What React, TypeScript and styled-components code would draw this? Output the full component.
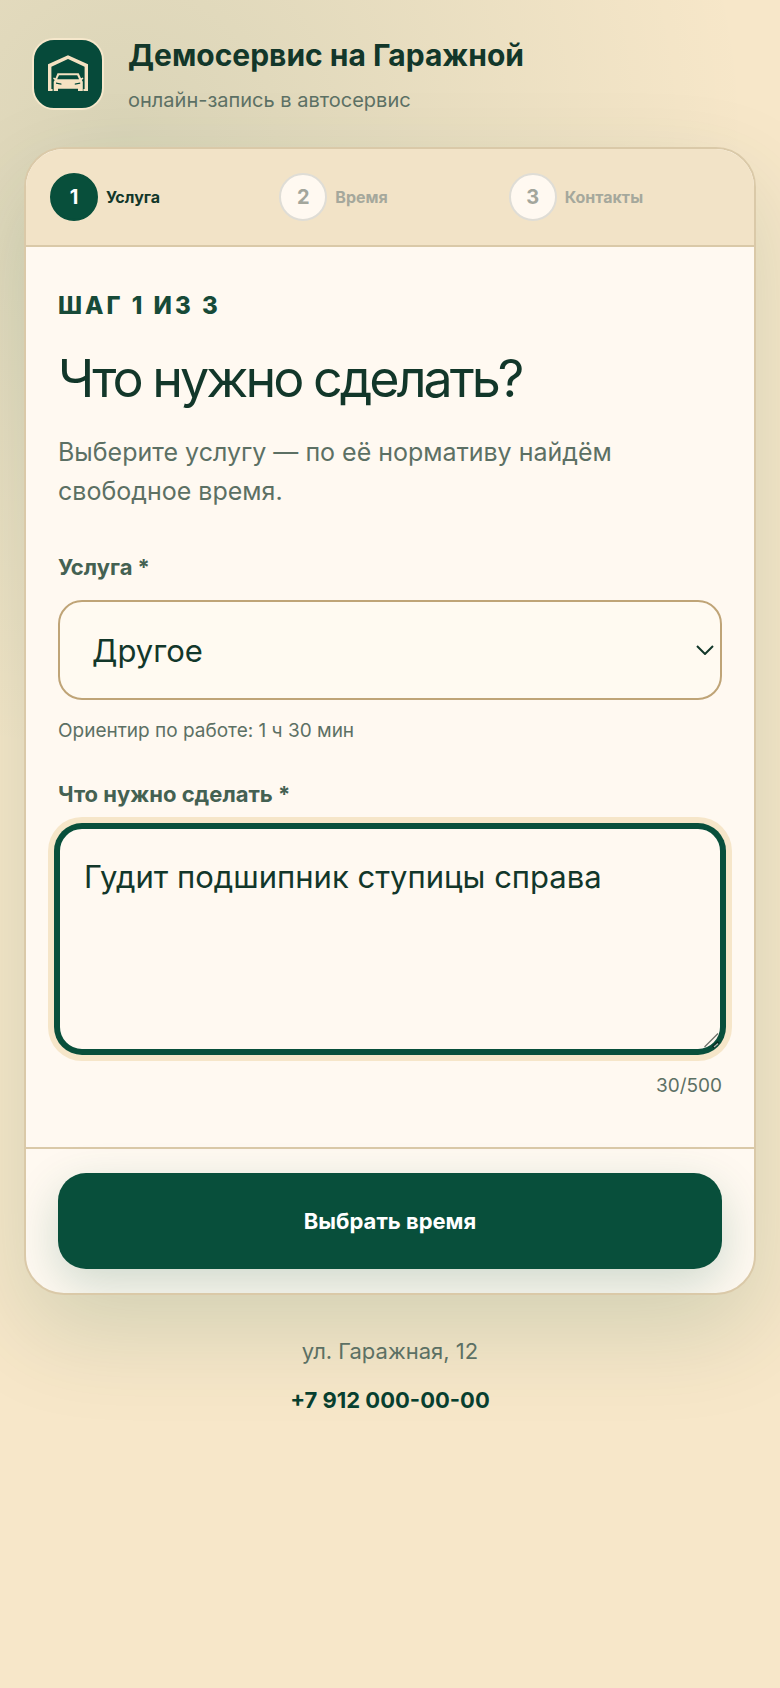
import React, { useState } from "react";
import styled, { createGlobalStyle } from "styled-components";

const ink = "#12372a";
const green = "#084f3b";
const muted = "#5c7064";
const line = "#dac9a8";

const GlobalStyle = createGlobalStyle`
  *, *::before, *::after { box-sizing: border-box; }
  html { background: #f7e7c9; }
  body {
    margin: 0;
    min-height: 100vh;
    color: ${ink};
    font-family: Inter, "Liberation Sans", sans-serif;
    background: radial-gradient(circle at 16% 8%, rgba(8, 79, 59, 0.12), transparent 37%) #f7e7c9;
  }
  h1, h2, p { margin: 0; }
  button, select, textarea { font-family: inherit; }
`;

const Page = styled.div`
  min-height: 100vh;
  padding: 38px 24px 48px;
`;

const Header = styled.header`
  display: flex;
  align-items: flex-start;
  gap: 24px;
  padding: 0 8px;
  margin-bottom: 33px;
`;

const Logo = styled.div`
  flex: none;
  width: 72px;
  height: 72px;
  border: 2px solid #f5e7cb;
  border-radius: 22px;
  background: #064a3a;
  overflow: hidden;

  svg { display: block; width: 68px; height: 68px; }
`;

const Brand = styled.div`
  display: flex;
  flex-direction: column;
  gap: 14px;
`;

const BrandName = styled.p`
  font-size: 30px;
  line-height: 34px;
  font-weight: 700;
`;

const BrandNote = styled.p`
  font-size: 20px;
  line-height: 28px;
  color: ${muted};
`;

const Card = styled.main`
  border: 2px solid ${line};
  border-radius: 40px;
  background: #fff9f1;
  overflow: hidden;
  box-shadow: 0 36px 96px rgba(8, 79, 59, 0.15);
`;

const Steps = styled.ol`
  display: grid;
  grid-template-columns: repeat(3, 1fr);
  gap: 8px;
  margin: 0;
  padding: 24px;
  list-style: none;
  background: #f2e3c7;
  border-bottom: 2px solid ${line};
`;

const Step = styled.li<{ $active?: boolean }>`
  display: flex;
  align-items: center;
  gap: 8px;
  font-size: 16px;
  line-height: 20px;
  font-weight: 700;
  color: ${(p) => (p.$active ? ink : "#a5a89c")};
`;

const StepNumber = styled.span<{ $active?: boolean }>`
  display: grid;
  place-items: center;
  width: 48px;
  height: 48px;
  border: 2px solid ${(p) => (p.$active ? green : "#dfddd6")};
  border-radius: 50%;
  background: ${(p) => (p.$active ? green : "#fff9f1")};
  color: ${(p) => (p.$active ? "#ffffff" : "#a3a69c")};
  font-size: 20px;
`;

const Form = styled.form`
  display: block;
`;

const Body = styled.div`
  padding: 40px 32px 46px;
`;

const Eyebrow = styled.p`
  font-size: 24px;
  line-height: 38px;
  font-weight: 800;
  letter-spacing: 3px;
  text-transform: uppercase;
  color: #174a38;
`;

const Title = styled.h1`
  margin-top: 24px;
  font-size: 52px;
  line-height: 60px;
  font-weight: 400;
  letter-spacing: -3px;
`;

const Lead = styled.p`
  margin: 24px 0 40px;
  font-size: 25px;
  line-height: 39px;
  color: ${muted};
`;

const Field = styled.div`
  & + & { margin-top: 32px; }
`;

const Label = styled.label`
  display: block;
  font-size: 22px;
  line-height: 33px;
  font-weight: 700;
  color: #446152;
`;

const SelectBox = styled.div`
  position: relative;
  margin-top: 16px;

  svg {
    position: absolute;
    top: 50%;
    right: 8px;
    width: 18px;
    height: 10px;
    margin-top: -5px;
    pointer-events: none;
  }
`;

const Select = styled.select`
  display: block;
  appearance: none;
  width: 100%;
  height: 100px;
  padding: 0 32px;
  border: 2px solid #bfa477;
  border-radius: 24px;
  background: #fffaf1;
  color: ${ink};
  font-size: 31px;
`;

const Hint = styled.p`
  margin-top: 16px;
  font-size: 19px;
  line-height: 30px;
  color: ${muted};
`;

const AreaBox = styled.div`
  position: relative;
  margin-top: 16px;

  svg {
    position: absolute;
    right: 2px;
    bottom: 2px;
    width: 18px;
    height: 18px;
    pointer-events: none;
  }
`;

const TextArea = styled.textarea`
  display: block;
  width: 100%;
  height: 224px;
  padding: 24px;
  border: 2px solid ${green};
  border-radius: 24px;
  outline: none;
  resize: none;
  background: #fff9f1;
  box-shadow: 0 0 0 4px ${green}, 0 0 0 10px #f6e6c9;
  color: ${ink};
  font-size: 31px;
  line-height: 48px;
`;

const Counter = styled.p`
  margin-top: 20px;
  font-size: 19px;
  line-height: 30px;
  text-align: right;
  color: ${muted};
`;

const Actions = styled.div`
  padding: 24px 32px;
  border-top: 2px solid ${line};
`;

const Submit = styled.button`
  display: block;
  width: 100%;
  height: 96px;
  border: 0;
  border-radius: 28px;
  background: ${green};
  box-shadow: 0 16px 48px rgba(8, 95, 65, 0.2);
  color: #ffffff;
  font-size: 22px;
  font-weight: 700;
  cursor: pointer;
`;

const Footer = styled.footer`
  display: flex;
  flex-direction: column;
  align-items: center;
  gap: 16px;
  padding-top: 40px;
  font-size: 22px;
  line-height: 33px;
  color: ${muted};
`;

const Phone = styled.a`
  color: #083f2f;
  font-weight: 700;
  text-decoration: none;
`;

const GarageIcon = () => (
  <svg viewBox="0 0 68 68" aria-hidden="true">
    <path
      d="M14 51V24.3L34 15.2l20 9.1V51h-4.6v-2h1.2V26.7L34 18.9l-16.6 7.8V49h1.2v2z"
      fill="#f5e2c2"
    />
    <path
      fillRule="evenodd"
      d="M23.5 33.2h21.2l2.3 5 1.8-.7.6 1.2-1.6 1.3 1 1.8V51H44v-2.2H24V51h-4.3v-9.2l1-1.8-1.6-1.3.6-1.2 1.8.7zM25 35.2l-1.9 4h22l-1.9-4zM22 42.6v1.2l5.4.9v-1.2zM46.2 42.6l-5.4.9v1.2l5.4-.9z"
      fill="#f5e2c2"
    />
  </svg>
);

const steps = ["Услуга", "Время", "Контакты"];
const services = ["Другое", "Замена масла", "Диагностика"];

export default function App() {
  const [text, setText] = useState("Гудит подшипник ступицы справа");
  return (
    <>
      <GlobalStyle />
      <Page>
        <Header>
          <Logo>
            <GarageIcon />
          </Logo>
          <Brand>
            <BrandName>Демосервис на Гаражной</BrandName>
            <BrandNote>онлайн-запись в автосервис</BrandNote>
          </Brand>
        </Header>
        <Card>
          <Steps>
            {steps.map((name, i) => (
              <Step key={name} $active={i === 0}>
                <StepNumber $active={i === 0}>{i + 1}</StepNumber>
                {name}
              </Step>
            ))}
          </Steps>
          <Form onSubmit={(e) => e.preventDefault()}>
            <Body>
              <Eyebrow>Шаг 1 из 3</Eyebrow>
              <Title>Что нужно сделать?</Title>
              <Lead>Выберите услугу — по её нормативу найдём свободное время.</Lead>
              <Field>
                <Label htmlFor="service">Услуга *</Label>
                <SelectBox>
                  <Select id="service" defaultValue="Другое">
                    {services.map((s) => (
                      <option key={s}>{s}</option>
                    ))}
                  </Select>
                  <svg viewBox="0 0 18 10" aria-hidden="true">
                    <path d="M1 1l8 8 8-8" fill="none" stroke={ink} strokeWidth="2" />
                  </svg>
                </SelectBox>
                <Hint>Ориентир по работе: 1 ч 30 мин</Hint>
              </Field>
              <Field>
                <Label htmlFor="details">Что нужно сделать *</Label>
                <AreaBox>
                  <TextArea
                    id="details"
                    maxLength={500}
                    value={text}
                    onChange={(e) => setText(e.target.value)}
                  />
                  <svg viewBox="0 0 18 18" aria-hidden="true">
                    <path d="M11 16.5L16.5 11" stroke="#062b20" strokeWidth="3" />
                    <path d="M2.5 16L16 2.5" stroke="#6b6f68" strokeWidth="1.3" />
                    <path d="M12 16l4-3.5" stroke="#a9b5ae" strokeWidth="1.3" />
                  </svg>
                </AreaBox>
                <Counter>{text.length}/500</Counter>
              </Field>
            </Body>
            <Actions>
              <Submit type="submit">Выбрать время</Submit>
            </Actions>
          </Form>
        </Card>
        <Footer>
          <p>ул. Гаражная, 12</p>
          <Phone href="tel:+79120000000">+7 912 000-00-00</Phone>
        </Footer>
      </Page>
    </>
  );
}
